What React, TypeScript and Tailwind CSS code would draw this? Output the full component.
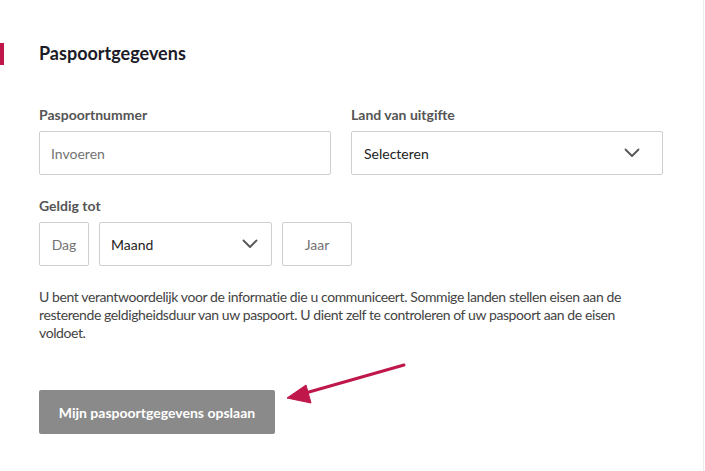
import React from "react";

// Chevron for the select boxes
const Chevron = () => (
  <svg width="16" height="10" viewBox="0 0 16 10" fill="none" className="shrink-0">
    <path d="M1.5 1.5 L8 8 L14.5 1.5" stroke="#555" strokeWidth="1.8" strokeLinecap="round" strokeLinejoin="round" />
  </svg>
);

const Label = ({ children }: { children: React.ReactNode }) => (
  <div className="text-[14px] font-bold text-[#555] leading-[18px] mb-[7px]">{children}</div>
);

const App = () => {
  return (
    <div className="relative w-full h-[471px] bg-white overflow-hidden" style={{ fontFamily: "Lato, 'Noto Sans', sans-serif" }}>
      <div className="relative w-[704px] h-full border-r border-[#ececec]">
        {/* accent bar */}
        <div className="absolute left-0 top-[43px] w-[4px] h-[22px] bg-[#c0174a]" />

        <div className="pl-[39px] pt-[42px] w-[663px]">
          <h2 className="text-[18px] font-bold text-[#1c1c28] leading-[22px]">Paspoortgegevens</h2>

          <div className="grid grid-cols-[292px_312px] gap-x-[20px] mt-[42px]">
            <div>
              <Label>Paspoortnummer</Label>
              <div className="h-[44px] border border-[#cfcfcf] rounded-[2px] flex items-center px-[11px] text-[14px] text-[#737373]">
                Invoeren
              </div>
            </div>
            <div>
              <Label>Land van uitgifte</Label>
              <div className="h-[44px] border border-[#cfcfcf] rounded-[2px] flex items-center justify-between pl-[12px] pr-[22px] text-[14px] text-[#222]">
                <span>Selecteren</span>
                <Chevron />
              </div>
            </div>
          </div>

          <div className="mt-[22px]">
            <Label>Geldig tot</Label>
            <div className="flex gap-[10px]">
              <div className="w-[50px] h-[44px] border border-[#cfcfcf] rounded-[2px] flex items-center justify-center text-[14px] text-[#737373]">
                Dag
              </div>
              <div className="w-[173px] h-[44px] border border-[#cfcfcf] rounded-[2px] flex items-center justify-between pl-[11px] pr-[13px] text-[14px] text-[#222]">
                <span>Maand</span>
                <Chevron />
              </div>
              <div className="w-[70px] h-[44px] border border-[#cfcfcf] rounded-[2px] flex items-center justify-center text-[14px] text-[#737373]">
                Jaar
              </div>
            </div>
          </div>

          <p className="mt-[22px] text-[14px] leading-[18px] tracking-[-0.4px] text-[#444] w-[624px]">
            U bent verantwoordelijk voor de informatie die u communiceert. Sommige landen stellen eisen aan de
            resterende geldigheidsduur van uw paspoort. U dient zelf te controleren of uw paspoort aan de eisen
            voldoet.
          </p>

          <button className="mt-[48px] w-[236px] h-[44px] bg-[#8a8a8a] rounded-[2px] text-white text-[14px] font-bold">
            Mijn paspoortgegevens opslaan
          </button>
        </div>

        {/* annotation arrow */}
        <svg className="absolute left-[280px] top-[358px]" width="135" height="50" viewBox="0 0 135 50" fill="none">
          <path d="M124 7 L22 36" stroke="#c0174a" strokeWidth="3" strokeLinecap="round" />
          <path d="M7 40 L26 27 L31 45 Z" fill="#c0174a" stroke="#c0174a" strokeWidth="1" strokeLinejoin="round" />
        </svg>
      </div>
    </div>
  );
};

export default App;
